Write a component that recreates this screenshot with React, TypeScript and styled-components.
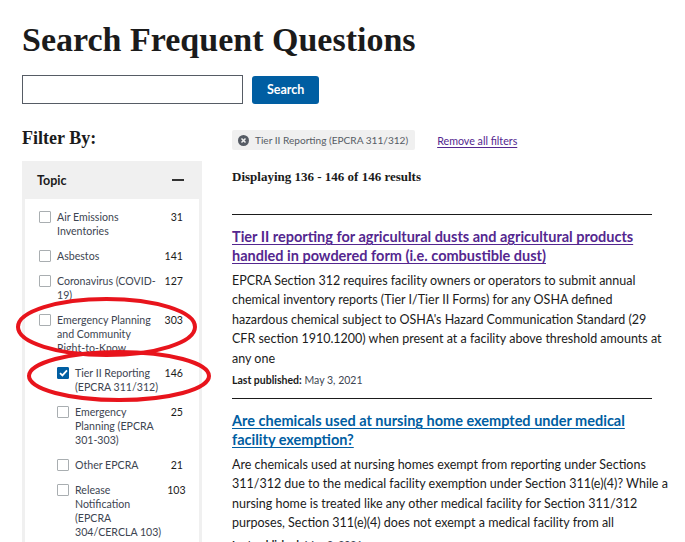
import React from 'react';
import styled, { createGlobalStyle } from 'styled-components';

const GlobalStyle = createGlobalStyle`
  html, body {
    margin: 0;
    padding: 0;
    background: #ffffff;
  }
  body {
    font-family: Lato, "Open Sans", sans-serif;
    color: #1b1b1b;
    overflow: hidden;
  }
`;

const Page = styled.div`
  position: relative;
  width: 685px;
  height: 542px;
  overflow: hidden;
  padding: 0 22px;
  box-sizing: border-box;
`;

const Title = styled.h1`
  font-family: "Liberation Serif", serif;
  font-weight: 700;
  font-size: 34px;
  line-height: 40px;
  margin: 0;
  padding-top: 20px;
  color: #1b1b1b;
`;

const SearchRow = styled.form`
  display: flex;
  align-items: center;
  gap: 9px;
  margin-top: 15px;
`;

const SearchInput = styled.input`
  width: 221px;
  height: 29px;
  box-sizing: border-box;
  border: 1px solid #565c65;
  padding: 0 8px;
  font-size: 13px;
  outline: none;
`;

const SearchButton = styled.button`
  height: 28px;
  padding: 0 15px;
  border: none;
  border-radius: 3px;
  background: #005ea2;
  color: #ffffff;
  font-family: Lato, sans-serif;
  font-weight: 700;
  font-size: 12.5px;
`;

const Layout = styled.div`
  display: grid;
  grid-template-columns: 180px 420px;
  column-gap: 30px;
  margin-top: 21px;
`;

const Sidebar = styled.aside`
  display: flex;
  flex-direction: column;
`;

const FilterHeading = styled.h2`
  font-family: "Liberation Serif", serif;
  font-weight: 700;
  font-size: 18px;
  line-height: 22px;
  margin: 0 0 12px;
  padding-top: 2px;
`;

const Panel = styled.div`
  background: #f0f0f0;
  padding: 0 3px;
`;

const PanelHeader = styled.div`
  display: flex;
  align-items: center;
  justify-content: space-between;
  height: 38px;
  padding: 0 15px 0 12px;
  font-weight: 700;
  font-size: 12.5px;
  color: #1b1b1b;
`;

const Minus = styled.span`
  width: 12px;
  height: 2px;
  background: #333333;
`;

const OptionList = styled.ul`
  list-style: none;
  margin: 0;
  padding: 11px 16px 40px 14px;
  background: #ffffff;
  display: flex;
  flex-direction: column;
  gap: 11px;
`;

const Option = styled.li<{ $nested?: boolean }>`
  display: grid;
  grid-template-columns: 12px 1fr auto;
  column-gap: 6px;
  padding-left: ${({ $nested }) => ($nested ? '18px' : '0')};
  font-size: 10.6px;
  line-height: 14px;
  color: #3d4551;
`;

const Box = styled.span<{ $checked?: boolean }>`
  width: 12px;
  height: 12px;
  margin-top: 1px;
  box-sizing: border-box;
  border: 1px solid ${({ $checked }) => ($checked ? '#005ea2' : '#a9aeb1')};
  background: ${({ $checked }) => ($checked ? '#005ea2' : '#ffffff')};
  border-radius: 1px;
  display: flex;
  align-items: center;
  justify-content: center;
`;

const OptionLabel = styled.span`
  white-space: nowrap;
`;

const Count = styled.span`
  text-align: right;
  min-width: 18px;
  color: #1b1b1b;
`;

const Results = styled.main`
  display: flex;
  flex-direction: column;
  padding-top: 5px;
`;

const FilterBar = styled.div`
  display: flex;
  align-items: center;
  gap: 22px;
`;

const Chip = styled.span`
  display: inline-flex;
  align-items: center;
  gap: 6px;
  height: 20px;
  padding: 0 7px 0 6px;
  background: #f0f0f0;
  border-radius: 2px;
  font-size: 10.1px;
  color: #565c65;
`;

const RemoveAll = styled.a`
  font-size: 10.7px;
  color: #54278f;
  text-decoration: underline;
  text-underline-offset: 2px;
`;

const Tally = styled.p`
  font-family: "Liberation Serif", serif;
  font-weight: 700;
  font-size: 13px;
  line-height: 16px;
  margin: 19px 0 0;
`;

const Result = styled.article`
  border-top: 1px solid #1b1b1b;
  padding: 12px 0 10px;
  &:first-of-type {
    margin-top: 29px;
  }
`;

const ResultTitle = styled.a<{ $visited?: boolean }>`
  display: block;
  font-weight: 700;
  font-size: 14.5px;
  line-height: 19px;
  color: ${({ $visited }) => ($visited ? '#54278f' : '#005ea2')};
  text-decoration: underline;
  text-underline-offset: 2px;
`;

const Line = styled.span`
  display: block;
  white-space: nowrap;
`;

const Summary = styled.p`
  margin: 6px 0 0;
  font-size: 12.5px;
  line-height: 19.4px;
  color: #1b1b1b;
`;

const Published = styled.p`
  margin: 4px 0 0;
  font-size: 10.5px;
  line-height: 16px;
  color: #3d4551;
  b {
    color: #1b1b1b;
  }
`;

const Annotations = styled.svg`
  position: absolute;
  left: 0;
  top: 0;
  pointer-events: none;
`;

type Topic = { lines: string[]; count: number; nested?: boolean; checked?: boolean };

const topics: Topic[] = [
  { lines: ['Air Emissions', 'Inventories'], count: 31 },
  { lines: ['Asbestos'], count: 141 },
  { lines: ['Coronavirus (COVID-', '19)'], count: 127 },
  { lines: ['Emergency Planning', 'and Community', 'Right-to-Know'], count: 303 },
  { lines: ['Tier II Reporting', '(EPCRA 311/312)'], count: 146, nested: true, checked: true },
  { lines: ['Emergency', 'Planning (EPCRA', '301-303)'], count: 25, nested: true },
  { lines: ['Other EPCRA'], count: 21, nested: true },
  { lines: ['Release', 'Notification', '(EPCRA', '304/CERCLA 103)'], count: 103, nested: true },
];

const results = [
  {
    visited: true,
    title: [
      'Tier II reporting for agricultural dusts and agricultural products',
      'handled in powdered form (i.e. combustible dust)',
    ],
    summary: [
      'EPCRA Section 312 requires facility owners or operators to submit annual',
      'chemical inventory reports (Tier I/Tier II Forms) for any OSHA defined',
      "hazardous chemical subject to OSHA's Hazard Communication Standard (29",
      'CFR section 1910.1200) when present at a facility above threshold amounts at',
      'any one',
    ],
    date: 'May 3, 2021',
  },
  {
    visited: false,
    title: ['Are chemicals used at nursing home exempted under medical', 'facility exemption?'],
    summary: [
      'Are chemicals used at nursing homes exempt from reporting under Sections',
      '311/312 due to the medical facility exemption under Section 311(e)(4)? While a',
      'nursing home is treated like any other medical facility for Section 311/312',
      'purposes, Section 311(e)(4) does not exempt a medical facility from all',
    ],
    date: 'May 3, 2021',
  },
];

const Check = () => (
  <svg width="9" height="8" viewBox="0 0 9 8">
    <path d="M1 4.2 L3.4 6.4 L8 1.4" fill="none" stroke="#fff" strokeWidth="1.8" />
  </svg>
);

const CloseCircle = () => (
  <svg width="11" height="11" viewBox="0 0 12 12">
    <circle cx="6" cy="6" r="6" fill="#565c65" />
    <path d="M3.8 3.8 L8.2 8.2 M8.2 3.8 L3.8 8.2" stroke="#f0f0f0" strokeWidth="1.6" />
  </svg>
);

const App: React.FC = () => {
  return (
    <Page>
      <GlobalStyle />
      <Title>Search Frequent Questions</Title>
      <SearchRow onSubmit={(e) => e.preventDefault()}>
        <SearchInput type="search" aria-label="Search" />
        <SearchButton type="submit">Search</SearchButton>
      </SearchRow>

      <Layout>
        <Sidebar>
          <FilterHeading>Filter By:</FilterHeading>
          <Panel>
            <PanelHeader>
              Topic
              <Minus />
            </PanelHeader>
            <OptionList>
              {topics.map((t) => (
                <Option key={t.lines.join(' ')} $nested={t.nested}>
                  <Box $checked={t.checked}>{t.checked && <Check />}</Box>
                  <OptionLabel>
                    {t.lines.map((l) => (
                      <Line key={l}>{l}</Line>
                    ))}
                  </OptionLabel>
                  <Count>{t.count}</Count>
                </Option>
              ))}
            </OptionList>
          </Panel>
        </Sidebar>

        <Results>
          <FilterBar>
            <Chip>
              <CloseCircle />
              Tier II Reporting (EPCRA 311/312)
            </Chip>
            <RemoveAll href="#">Remove all filters</RemoveAll>
          </FilterBar>
          <Tally>Displaying 136 - 146 of 146 results</Tally>
          {results.map((r) => (
            <Result key={r.title[0]}>
              <ResultTitle href="#" $visited={r.visited}>
                {r.title.map((l) => (
                  <Line key={l}>{l}</Line>
                ))}
              </ResultTitle>
              <Summary>
                {r.summary.map((l) => (
                  <Line key={l}>{l}</Line>
                ))}
              </Summary>
              <Published>
                <b>Last published:</b> {r.date}
              </Published>
            </Result>
          ))}
        </Results>
      </Layout>

      <Annotations width="685" height="542" viewBox="0 0 685 542">
        <ellipse cx="106.5" cy="327" rx="88.5" ry="28" fill="none" stroke="#e8141c" strokeWidth="4" />
        <ellipse cx="119" cy="376" rx="90" ry="24" fill="none" stroke="#e8141c" strokeWidth="4" />
      </Annotations>
    </Page>
  );
};

export default App;
